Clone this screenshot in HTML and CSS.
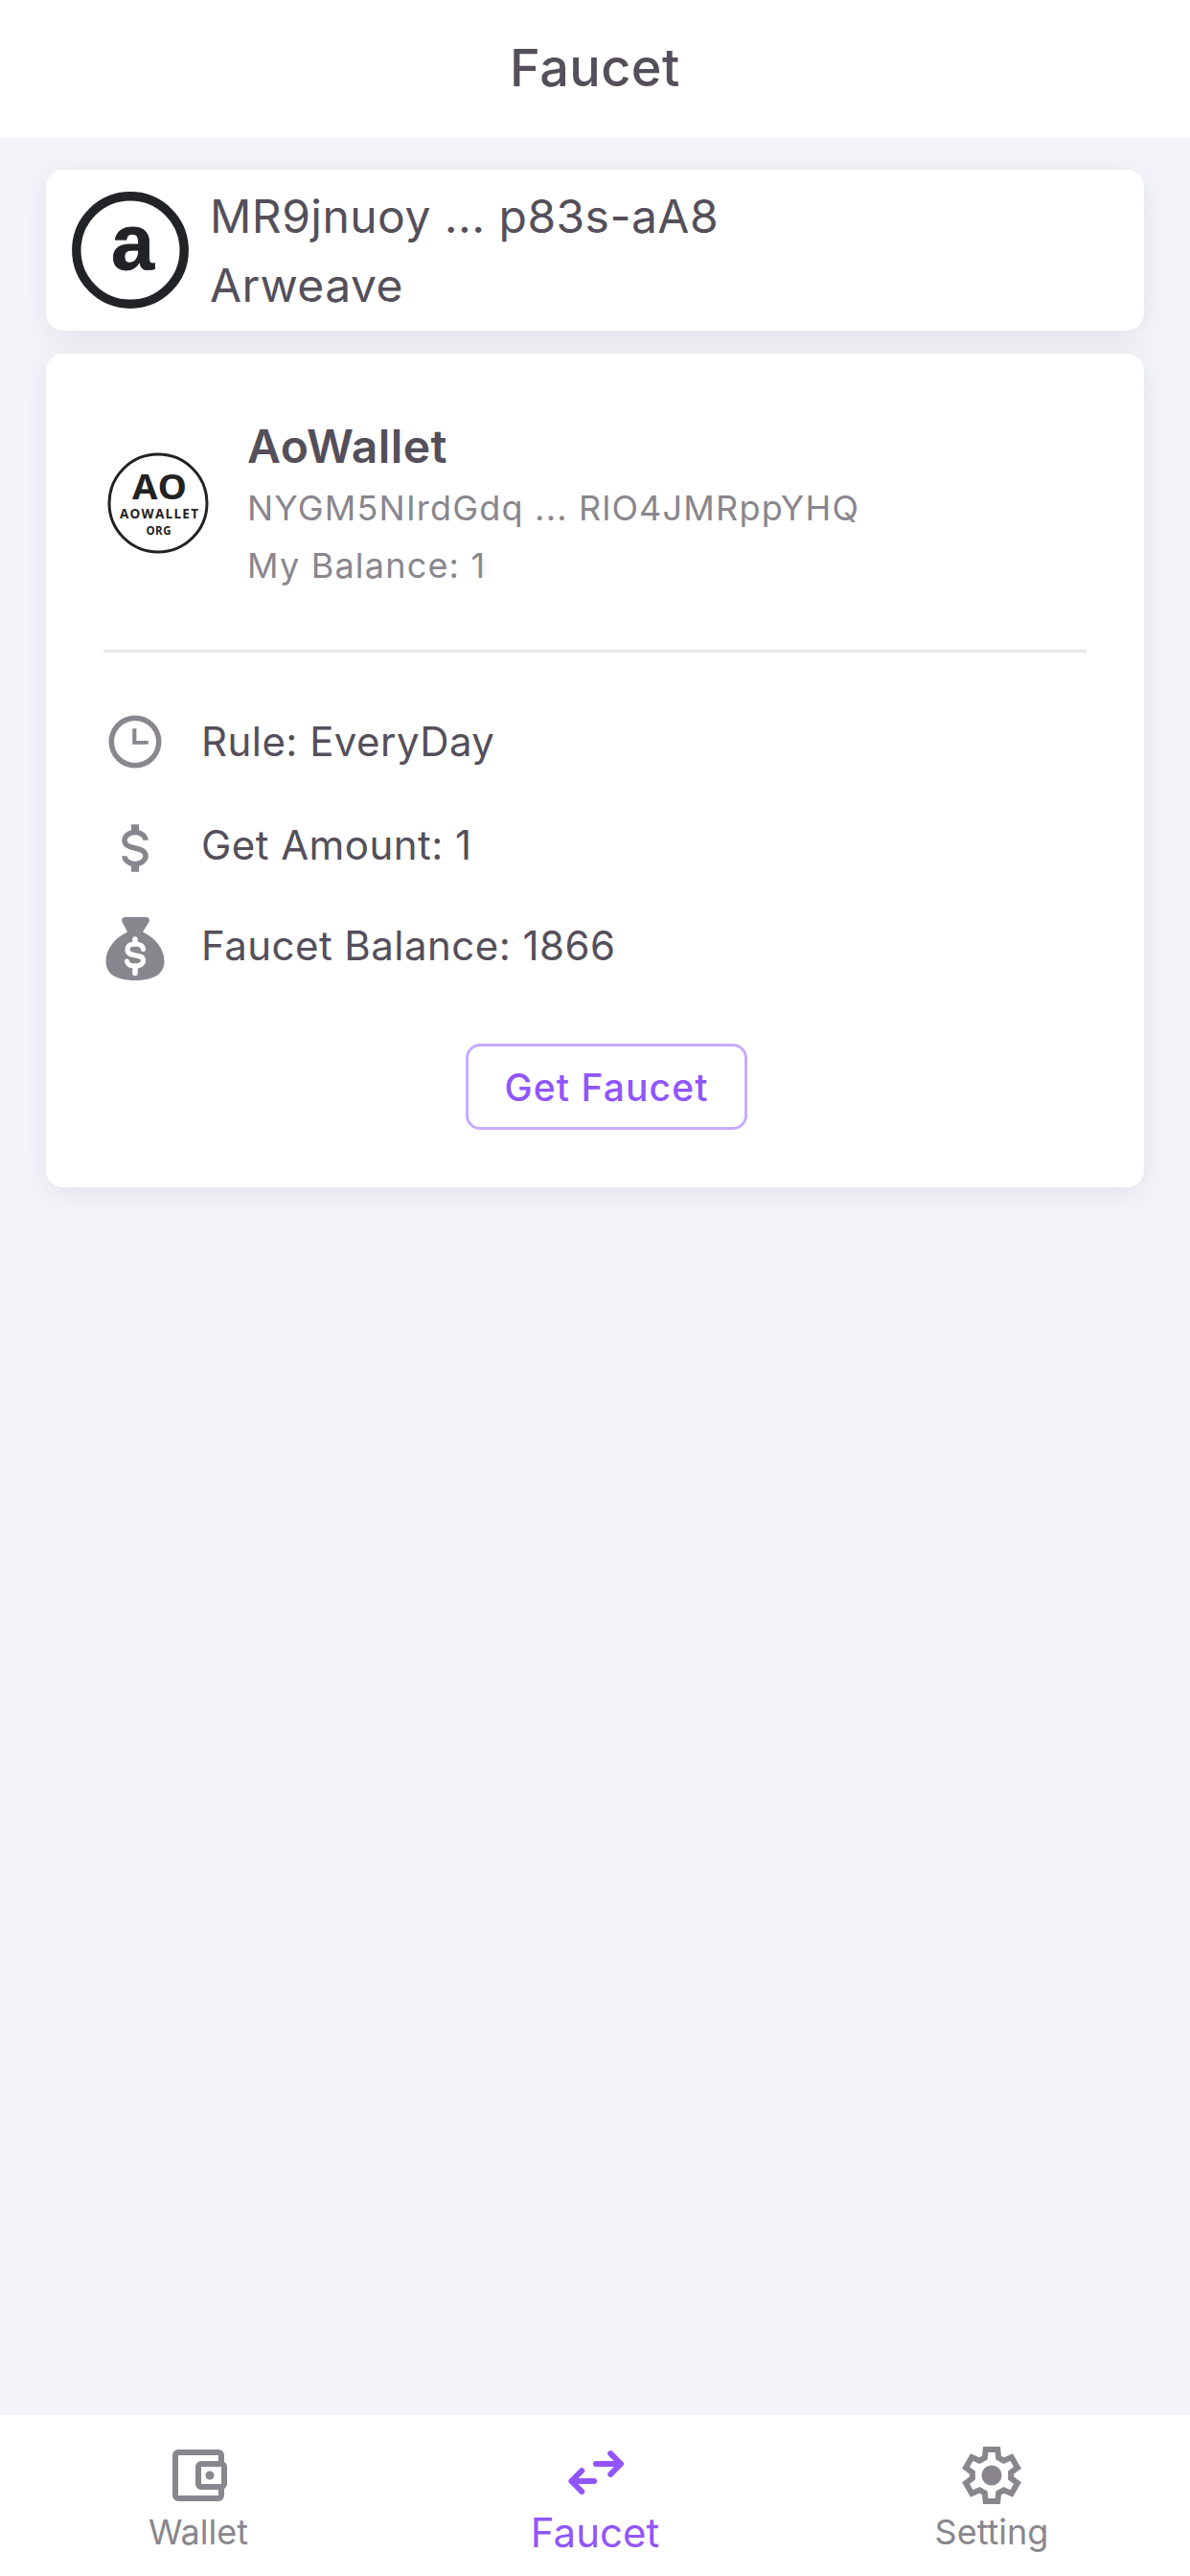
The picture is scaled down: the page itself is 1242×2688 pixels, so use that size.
FILE: index.html
```html
<!DOCTYPE html>
<html lang="en">
<head>
<meta charset="utf-8">
<title>Faucet</title>
<link rel="stylesheet" href="styles.css">
</head>
<body>
<div class="app">
  <header class="header"><h1 class="title">Faucet</h1></header>
  <main class="content">
    <section class="card account">
      <svg class="account-logo" viewBox="0 0 122 122">
        <circle cx="61" cy="61" r="56.2" fill="none" stroke="#222326" stroke-width="9.4"/>
        <text x="41" y="80.500" font-family="Liberation Sans, sans-serif" font-weight="700" font-size="81" textLength="45" lengthAdjust="spacingAndGlyphs" fill="#222326" stroke="#222326" stroke-width="0.8">a</text>
      </svg>
      <div class="account-text">
        <div>MR9jnuoy ... p83s-aA8</div>
        <div>Arweave</div>
      </div>
    </section>
    <section class="card faucet">
      <div class="token">
        <svg class="token-logo" viewBox="0 0 108 108">
          <circle cx="54" cy="54" r="51" fill="none" stroke="#222" stroke-width="3"/>
          <g font-family="Open Sans, sans-serif" font-weight="700" fill="#222">
            <text x="27" y="50" font-size="35.500" textLength="57" lengthAdjust="spacingAndGlyphs">AO</text>
            <text x="14" y="69.500" font-size="13.500" textLength="82">AOWALLET</text>
            <text x="41.500" y="87" font-size="11.500" textLength="26">ORG</text>
          </g>
        </svg>
        <div class="token-text">
          <div class="token-name">AoWallet</div>
          <div class="token-line">NYGM5NIrdGdq ... RlO4JMRppYHQ</div>
          <div class="token-line">My Balance: 1</div>
        </div>
      </div>
      <hr class="divider">
      <ul class="facts">
        <li class="fact"><svg class="icon" viewBox="0 0 24 24"><path fill-rule="evenodd" d="M12 2a10 10 0 1 0 0 20a10 10 0 0 0 0-20M12 4a8 8 0 1 1 0 16a8 8 0 0 1 0-16M11 7h1.500v4.600H17V13h-6z"/></svg><span>Rule: EveryDay</span></li>
        <li class="fact"><svg class="icon lowered" viewBox="0 0 24 24"><path d="M7,15H9C9,16.08 10.37,17 12,17C13.63,17 15,16.08 15,15C15,13.9 13.96,13.5 11.76,12.97C9.64,12.44 7,11.78 7,9C7,7.21 8.47,5.69 10.5,5.18V3H13.5V5.18C15.53,5.69 17,7.21 17,9H15C15,7.92 13.63,7 12,7C10.37,7 9,7.92 9,9C9,10.1 10.04,10.5 12.24,11.03C14.36,11.56 17,12.22 17,15C17,16.79 15.53,18.31 13.5,18.82V21H10.5V18.82C8.47,18.31 7,16.79 7,15Z"/></svg><span>Get Amount: 1</span></li>
        <li class="fact last"><svg class="icon lowered" viewBox="0 0 66 66"><path d="M22 0H45Q49 1 47.500 5L41 15.500C55 22 63.500 34 63.500 46C63.500 60 52 66 33 66S2.500 60 2.500 46C2.500 34 11 22 25 15.500L19.500 5Q18 1 22 0Z"/><path d="M41.500 33.500C41 29.500 37.500 28 33 28C28 28 25 30 25 34C25 42.500 41.500 37.500 41.500 45C41.500 49 38 51 33 51C28.500 51 25 49.500 24.500 46" fill="none" stroke="#fff" stroke-width="5.200" stroke-linecap="round"/><path d="M33 23v5M33 51v7.500" fill="none" stroke="#fff" stroke-width="5.600" stroke-linecap="round"/></svg><span>Faucet Balance: 1866</span></li>
      </ul>
      <button class="button">Get Faucet</button>
    </section>
  </main>
  <nav class="nav">
    <a class="tab"><svg class="tab-icon" viewBox="0 0 24 24"><g fill="none" stroke="currentColor" stroke-width="2"><path d="M20 8V5a1 1 0 0 0-1-1H5a1 1 0 0 0-1 1v14a1 1 0 0 0 1 1h14a1 1 0 0 0 1-1v-3"/><rect x="12" y="8" width="9" height="8" rx="1"/></g><circle cx="16" cy="12" r="1.500"/></svg><span>Wallet</span></a>
    <a class="tab active"><svg class="tab-icon" viewBox="0 0 24 24"><path d="M12.300 8H21M17.400 4.400L21 8l-3.600 3.600M11.700 14H3.800M7.400 10.400L3.800 14l3.600 3.600" fill="none" stroke="currentColor" stroke-width="2" stroke-linecap="round" stroke-linejoin="round"/></svg><span>Faucet</span></a>
    <a class="tab"><svg class="tab-icon" viewBox="0 0 24 24"><path d="M9.900 3h4.200l.3 2.900 1.800 1 2.700-1.200 2.100 3.600-2.300 1.700v2l2.300 1.700-2.100 3.600-2.700-1.200-1.800 1-.3 2.900H9.900l-.3-2.900-1.800-1-2.700 1.200L3 14.700 5.300 13v-2L3 9.300l2.100-3.600 2.700 1.200 1.800-1z" fill="none" stroke="currentColor" stroke-width="2"/><circle cx="12" cy="12" r="3.500"/></svg><span>Setting</span></a>
  </nav>
</div>
</body>
</html>
```
FILE: styles.css
```css
* { box-sizing: border-box; }
body { margin: 0; background: #f4f5fa; color: #544f5a; font-family: Inter, sans-serif; }
.app { display: flex; flex-direction: column; height: 2688px; }
.header { height: 144px; background: #fff; display: flex; align-items: center; justify-content: center; padding-bottom: 3px; }
.title { margin: 0; font-size: 54px; font-weight: 500; letter-spacing: 0.45px; line-height: 84px; }
.content { flex: 1; padding: 33px 48px 0; display: flex; flex-direction: column; gap: 24px; }
.card { background: #fff; border-radius: 18px; box-shadow: 0 6px 30px rgba(58, 53, 65, 0.1); }
.account { height: 168px; padding: 12px 27px; display: flex; align-items: center; gap: 22px; }
.account-logo { width: 122px; height: 122px; }
.account-text { font-size: 48px; line-height: 72px; letter-spacing: 0.45px; padding-top: 1px; }
.faucet { height: 870px; padding: 60px; display: flex; flex-direction: column; }
.token { display: flex; align-items: center; height: 192px; gap: 39px; padding-left: 3px; }
.token-logo { width: 108px; height: 108px; }
.token-name { font-size: 48px; font-weight: 600; line-height: 72px; letter-spacing: 0.45px; }
.token-line { font-size: 36px; line-height: 60px; letter-spacing: 1.2px; color: #89868d; }
.token-name + .token-line { margin-top: -2px; }
.divider { width: 100%; height: 3px; margin: 57px 0 39px; border: 0; background: #e7e7e8; }
.facts { list-style: none; margin: 0; padding: 0; }
.fact { display: flex; align-items: center; height: 108px; gap: 36px; font-size: 42px; letter-spacing: 0.45px; }
.fact span { padding-bottom: 2px; }
.fact.last { height: 102px; }
.icon { width: 66px; height: 66px; fill: #89868d; }
.lowered { margin-top: 6px; }
.button { width: 294px; height: 90px; margin: 51px 0 0 378px; padding: 0; border: 3px solid #c8aafe; border-radius: 15px; background: #fff; color: #9155fd; font: 500 39px Inter, sans-serif; letter-spacing: 1.1px; }
.nav { height: 168px; background: #fff; display: flex; }
.tab { flex: 1; display: flex; flex-direction: column; align-items: center; padding-top: 27px; color: #89868d; font-size: 36px; line-height: 46px; }
.tab-icon { width: 72px; height: 72px; fill: currentColor; }
.active { color: #9155fd; font-size: 42px; line-height: 48px; }
```
